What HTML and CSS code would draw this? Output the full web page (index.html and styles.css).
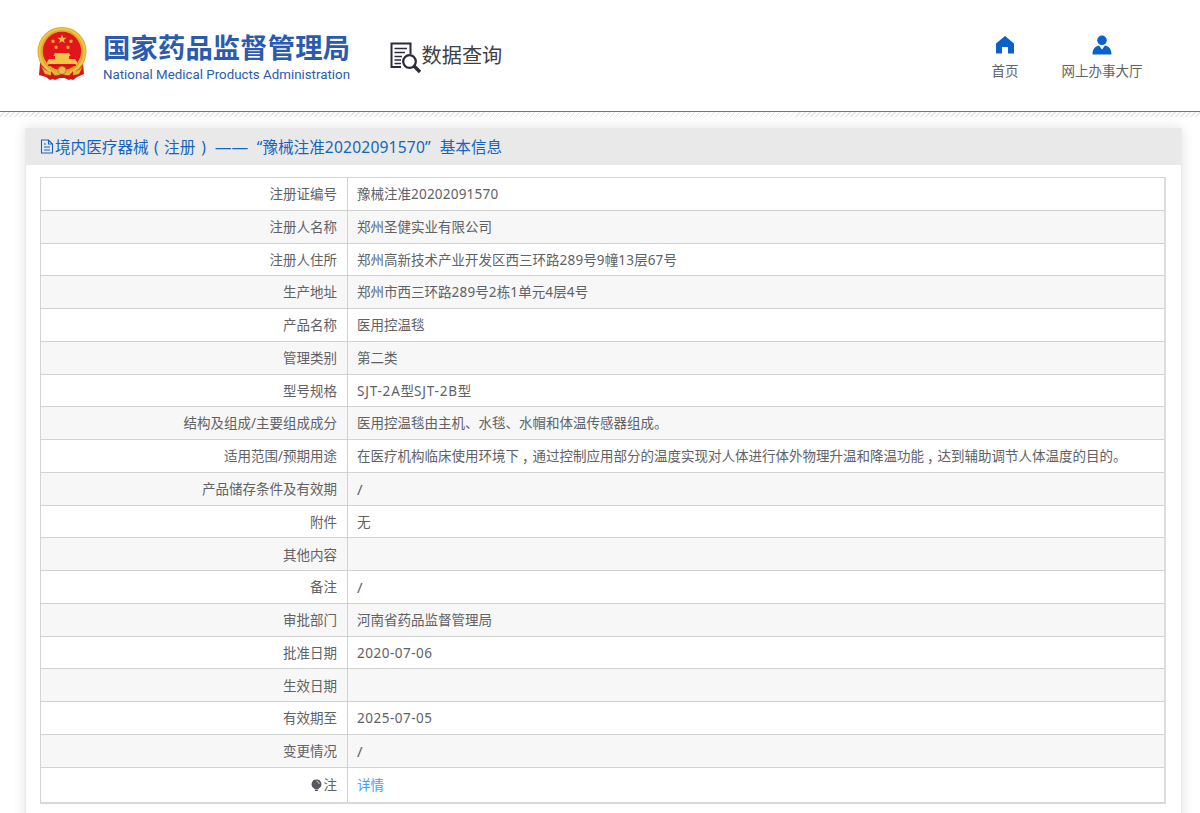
FILE: index.html
```html
<!DOCTYPE html>
<html lang="zh-CN">
<head>
<meta charset="utf-8">
<title>数据查询</title>
<link rel="stylesheet" href="styles.css">
</head>
<body>
<header class="top">
  <svg class="emblem" width="52" height="56" viewBox="0 0 52 56">
    <path d="M4 37L3 49L10 51L14 54L20 52H31L37 54L41 51L48 48L47 37Z" fill="#d9141c"/>
    <circle cx="26" cy="25.500" r="24.500" fill="#e0a92e"/>
    <circle cx="26" cy="25.500" r="22.500" fill="none" stroke="#efc64b" stroke-width="2"/>
    <circle cx="26" cy="25" r="19.200" fill="#e2141c"/>
    <path d="M26 8.500l1.200 3.300h3.500l-2.800 2.100 1 3.400-2.900-2-2.900 2 1-3.400-2.800-2.100h3.500zM17 13l.7 1.500 1.600.1-1.200 1.100.4 1.600-1.500-.8-1.400.8.300-1.600-1.200-1.100 1.600-.1zM35 13l.7 1.500 1.600.1-1.200 1.100.4 1.600-1.500-.8-1.400.8.300-1.600-1.200-1.100 1.600-.1zM20 19l.7 1.500 1.600.1-1.200 1.100.4 1.600-1.500-.8-1.400.8.300-1.600-1.200-1.100 1.600-.1zM32 19l.7 1.500 1.600.1-1.200 1.100.4 1.600-1.500-.8-1.400.8.300-1.600-1.200-1.100 1.600-.1z" fill="#edbd3e"/>
    <path d="M19 27h14l1.500 3H33v3h6l2 3v2H11v-2l2-3h6v-3h-1.500z" fill="#f0c548"/>
    <path d="M12 39.500h28" stroke="#b51b1b"/>
    <path d="M5 40Q12 48 20 46L23 42H29L32 46Q40 48 47 40L43 48L34 50L29 47H23L18 50L9 48Z" fill="#e6b238"/>
    <circle cx="26" cy="44.500" r="4" fill="#e7bd4b" stroke="#b98422"/>
    <path d="M15 45l4 5 7-2 7 2 4-5v7l-4 2-7-3-7 3-4-2z" fill="#d3151c"/>
  </svg>
  <svg class="brand" width="256" height="60" viewBox="0 0 256 60">
    <text class="brand-cn" x="1" y="27" textLength="247">国家药品监督管理局</text>
    <text class="brand-en" x="1" y="48" textLength="247" lengthAdjust="spacingAndGlyphs">National Medical Products Administration</text>
  </svg>
  <div class="query">
    <svg width="32" height="32" viewBox="0 0 32 32" fill="none" stroke="#2b2a3d">
      <path d="M20.500 12V1.500H1.500V25H11" stroke-width="2"/>
      <path d="M4.500 6.500H17M4.500 10.500H15M4.500 14.500H12M4.500 18H11M4.500 21.500H11" stroke-width="1.400"/>
      <circle cx="19.500" cy="19.500" r="6.300" stroke-width="2.300"/>
      <path d="M24 24L30 30" stroke-width="3.400"/>
    </svg>
    <span>数据查询</span>
  </div>
  <nav class="nav">
    <a class="nav-item"><svg width="20" height="20" viewBox="0 0 20 20" fill="#0a62c8"><path d="M10 1L1 8.500V18.500H7V12H13V18.500H19V8.500Z"/></svg><span>首页</span></a>
    <a class="nav-item"><svg width="20" height="20" viewBox="0 0 20 20" fill="#0a62c8"><circle cx="10" cy="5.300" r="4.800"/><path d="M.5 19.500C.5 14 3 11.500 7 10.500L10 14.500L13 10.500C17 11.500 19.500 14 19.500 19.500Z"/></svg><span>网上办事大厅</span></a>
  </nav>
</header>
<div class="hatch"></div>
<main class="card">
  <h1 class="title"><svg width="14" height="15" viewBox="0 0 14 15" fill="none" stroke="#1565c0" stroke-width="1.100"><path d="M8.500 1H1.500V14H12.500V5ZM8.500 1V5H12.500M4 5H6M4 8H10M4 11H10"/></svg><span class="lead">境内医疗器械</span><span class="open">(</span><span>注册</span><span class="close">)</span><span class="dash">——</span><span class="quote">“</span><span>豫械注准</span><span class="num">20202091570</span><span>”</span><span class="tail">基本信息</span></h1>
  <dl class="table">
    <div class="row"><dt>注册证编号</dt><dd>豫械注准<span class="n">20202091570</span></dd></div>
    <div class="row"><dt>注册人名称</dt><dd>郑州圣健实业有限公司</dd></div>
    <div class="row"><dt>注册人住所</dt><dd>郑州高新技术产业开发区西三环路<span class="n">289</span>号<span class="n">9</span>幢<span class="n">13</span>层<span class="n">67</span>号</dd></div>
    <div class="row"><dt>生产地址</dt><dd>郑州市西三环路<span class="n">289</span>号<span class="n">2</span>栋<span class="n">1</span>单元<span class="n">4</span>层<span class="n">4</span>号</dd></div>
    <div class="row"><dt>产品名称</dt><dd>医用控温毯</dd></div>
    <div class="row"><dt>管理类别</dt><dd>第二类</dd></div>
    <div class="row"><dt>型号规格</dt><dd><span class="model">SJT-2A</span>型<span class="model">SJT-2B</span>型</dd></div>
    <div class="row"><dt>结构及组成/主要组成成分</dt><dd>医用控温毯由主机、水毯、水帽和体温传感器组成。</dd></div>
    <div class="row"><dt>适用范围/预期用途</dt><dd>在医疗机构临床使用环境下<span class="comma">，</span>通过控制应用部分的温度实现对人体进行体外物理升温和降温功能<span class="comma">，</span>达到辅助调节人体温度的目的。</dd></div>
    <div class="row"><dt>产品储存条件及有效期</dt><dd class="slash">/</dd></div>
    <div class="row"><dt>附件</dt><dd>无</dd></div>
    <div class="row"><dt>其他内容</dt><dd></dd></div>
    <div class="row"><dt>备注</dt><dd class="slash">/</dd></div>
    <div class="row"><dt>审批部门</dt><dd>河南省药品监督管理局</dd></div>
    <div class="row"><dt>批准日期</dt><dd><span class="date">2020-07-06</span></dd></div>
    <div class="row"><dt>生效日期</dt><dd></dd></div>
    <div class="row"><dt>有效期至</dt><dd><span class="date">2025-07-05</span></dd></div>
    <div class="row"><dt>变更情况</dt><dd class="slash">/</dd></div>
    <div class="row last"><dt><svg class="bulb" width="11" height="13" viewBox="0 0 11 13"><path d="M5.500.5A4.700 4.700 0 0 1 8 9.300L7 10.500H4L3 9.300A4.700 4.700 0 0 1 5.500.5ZM4 11H7V12H4Z" fill="#55585c"/><path d="M5.500 2.200Q8 2.500 8.300 5" fill="none" stroke="#ddd" stroke-width=".9"/></svg>注</dt><dd><a class="link">详情</a></dd></div>
  </dl>
</main>
</body>
</html>
```
FILE: styles.css
```css
* { box-sizing: border-box; }
body {
  margin: 0;
  height: 813px;
  overflow: hidden;
  background: #fff;
  color: #606266;
  font: 13.5px/20px "Noto Sans", "Noto Sans CJK SC", sans-serif;
}
.top {
  display: flex;
  align-items: flex-start;
  height: 112px;
  padding: 26px 57.5px 0 36px;
  border-bottom: 1px solid #3f83c9;
}
.emblem { flex: none; }
.brand { flex: none; margin: 5px 0 0 14px; overflow: visible; }
.brand-cn { font: bold 27.3px "Noto Sans CJK SC", sans-serif; fill: #2b5bae; }
.brand-en { font: 13.4px Roboto, sans-serif; fill: #2b5bae; }
.query { display: flex; margin: 16px 0 0 32px; color: #404045; }
.query span { font: 400 20.2px/28px "Noto Sans CJK SC", sans-serif; margin: -1px 0 0 -.5px; }
.nav { display: flex; gap: 43px; margin: 9px 0 0 auto; }
.nav-item { display: flex; flex-direction: column; align-items: center; gap: 6px; }
.hatch {
  height: 5px;
  background: repeating-linear-gradient(135deg, #fff 0 2.4px, #e6e6e6 2.4px 3.54px);
}
.card {
  height: 720px;
  margin: 11px 18.500px 0 25px;
  border: 1px solid #ebebef;
  border-top: 0;
  background: #fff;
  box-shadow: 0 0 12px rgba(0, 0, 0, .12);
}
.title {
  display: flex;
  align-items: center;
  height: 37px;
  margin: 0;
  padding: 1px 0 0 14px;
  background: #e9e9e9;
  color: #1565c0;
  font-size: 15.6px;
  font-weight: 400;
  line-height: 24px;
}
.title svg { flex: none; margin-top: -1px; }
.lead { margin-left: 1px; }
.open { width: 15.500px; text-align: center; }
.close { width: 15.500px; text-align: center; padding-left: 1px; }
.dash { margin-left: 4px; width: 34px; font-size: 16.7px; white-space: nowrap; }
.quote { margin-left: 8px; }
.num { letter-spacing: .2px; }
.tail { margin-left: 9px; }
.table {
  margin: 12px 14.500px 0 14px;
  border: 1px solid #d3d4d6;
  border-width: 1px 2px 2px 1px;
  border-color: #d3d4d6 #dcdde2 #d8d8dc #d3d4d6;
}
.row { display: grid; grid-template-columns: 307px 1fr; height: 32.77px; border-bottom: 1px solid #d2d2d2; }
.row:nth-child(even) { background: #f7f7f7; }
.row.last { height: 34px; border: 0; }
dt, dd { margin: 0; display: flex; align-items: center; white-space: pre; padding-top: .5px; }
dt { justify-content: flex-end; padding-right: 10px; border-right: 1px solid #d2d2d2; }
dd { padding-left: 9px; }
.slash { font-size: 15px; }
.n { letter-spacing: .22px; }
.model { letter-spacing: .8px; }
.date { letter-spacing: .5px; }
.comma {
  display: inline-block;
  width: 13.5px;
  padding-left: 3px;
  font-family: "Noto Sans CJK SC", sans-serif;
  font-feature-settings: "halt";
}
.bulb { margin-right: 2px; }
.link { color: #409eff; }
```
